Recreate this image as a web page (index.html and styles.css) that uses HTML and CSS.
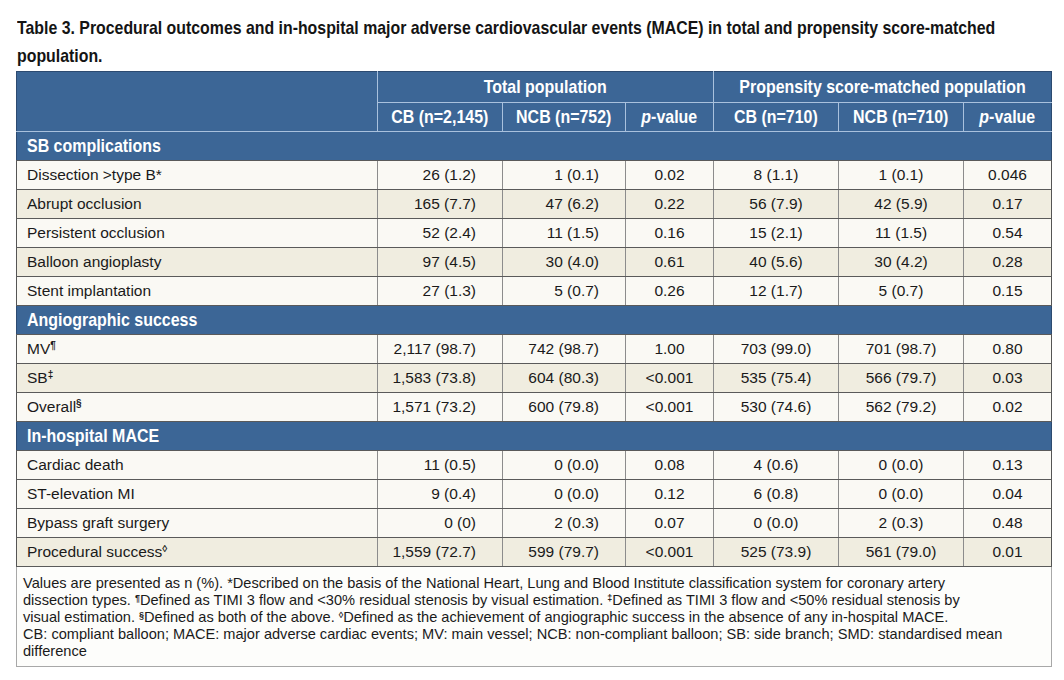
FILE: index.html
```html
<!DOCTYPE html>
<html lang="en">
<head>
<meta charset="utf-8">
<title>Table 3</title>
<link rel="stylesheet" href="styles.css">
</head>
<body>
<h1 class="title"><span class="title-in">Table 3. Procedural outcomes and in-hospital major adverse cardiovascular events (MACE) in total and propensity score-matched<br>population.</span></h1>
<table class="tbl">
  <colgroup>
    <col class="c-label">
    <col class="c-n">
    <col class="c-n2">
    <col class="c-p">
    <col class="c-n">
    <col class="c-n">
    <col class="c-p">
  </colgroup>
  <thead>
    <tr class="h1">
      <th class="blank" rowspan="2"></th>
      <th colspan="3"><div class="hc"><span class="cx">Total population</span></div></th>
      <th colspan="3"><div class="hc"><span class="cx">Propensity score-matched population</span></div></th>
    </tr>
    <tr class="h2">
      <th><div class="hc"><span class="cx">CB (n=2,145)</span></div></th>
      <th><div class="hc"><span class="cx">NCB (n=752)</span></div></th>
      <th><div class="hc"><span class="cx"><i>p</i>-value</span></div></th>
      <th><div class="hc"><span class="cx">CB (n=710)</span></div></th>
      <th><div class="hc"><span class="cx">NCB (n=710)</span></div></th>
      <th><div class="hc"><span class="cx"><i>p</i>-value</span></div></th>
    </tr>
  </thead>
  <tbody>
    <tr class="sec"><td colspan="7"><span class="cx cl">SB complications</span></td></tr>
    <tr class="odd"><td class="lab">Dissection &gt;type B*</td><td class="r">26 (1.2)</td><td class="r">1 (0.1)</td><td>0.02</td><td>8 (1.1)</td><td>1 (0.1)</td><td>0.046</td></tr>
    <tr class="even"><td class="lab">Abrupt occlusion</td><td class="r">165 (7.7)</td><td class="r">47 (6.2)</td><td>0.22</td><td>56 (7.9)</td><td>42 (5.9)</td><td>0.17</td></tr>
    <tr class="odd"><td class="lab">Persistent occlusion</td><td class="r">52 (2.4)</td><td class="r">11 (1.5)</td><td>0.16</td><td>15 (2.1)</td><td>11 (1.5)</td><td>0.54</td></tr>
    <tr class="even"><td class="lab">Balloon angioplasty</td><td class="r">97 (4.5)</td><td class="r">30 (4.0)</td><td>0.61</td><td>40 (5.6)</td><td>30 (4.2)</td><td>0.28</td></tr>
    <tr class="odd"><td class="lab">Stent implantation</td><td class="r">27 (1.3)</td><td class="r">5 (0.7)</td><td>0.26</td><td>12 (1.7)</td><td>5 (0.7)</td><td>0.15</td></tr>
    <tr class="sec"><td colspan="7"><span class="cx cl">Angiographic success</span></td></tr>
    <tr class="odd"><td class="lab">MV<sup>¶</sup></td><td class="r">2,117 (98.7)</td><td class="r">742 (98.7)</td><td>1.00</td><td>703 (99.0)</td><td>701 (98.7)</td><td>0.80</td></tr>
    <tr class="even"><td class="lab">SB<sup>‡</sup></td><td class="r">1,583 (73.8)</td><td class="r">604 (80.3)</td><td>&lt;0.001</td><td>535 (75.4)</td><td>566 (79.7)</td><td>0.03</td></tr>
    <tr class="odd"><td class="lab">Overall<sup>§</sup></td><td class="r">1,571 (73.2)</td><td class="r">600 (79.8)</td><td>&lt;0.001</td><td>530 (74.6)</td><td>562 (79.2)</td><td>0.02</td></tr>
    <tr class="sec"><td colspan="7"><span class="cx cl">In-hospital MACE</span></td></tr>
    <tr class="odd"><td class="lab">Cardiac death</td><td class="r">11 (0.5)</td><td class="r">0 (0.0)</td><td>0.08</td><td>4 (0.6)</td><td>0 (0.0)</td><td>0.13</td></tr>
    <tr class="odd"><td class="lab">ST-elevation MI</td><td class="r">9 (0.4)</td><td class="r">0 (0.0)</td><td>0.12</td><td>6 (0.8)</td><td>0 (0.0)</td><td>0.04</td></tr>
    <tr class="odd"><td class="lab">Bypass graft surgery</td><td class="r">0 (0)</td><td class="r">2 (0.3)</td><td>0.07</td><td>0 (0.0)</td><td>2 (0.3)</td><td>0.48</td></tr>
    <tr class="even"><td class="lab">Procedural success<sup>◊</sup></td><td class="r">1,559 (72.7)</td><td class="r">599 (79.7)</td><td>&lt;0.001</td><td>525 (73.9)</td><td>561 (79.0)</td><td>0.01</td></tr>
  </tbody>
  <tfoot>
    <tr><td colspan="7" class="note">Values are presented as n (%). *Described on the basis of the National Heart, Lung and Blood Institute classification system for coronary artery<br>dissection types. <sup>¶</sup>Defined as TIMI 3 flow and &lt;30% residual stenosis by visual estimation. <sup>‡</sup>Defined as TIMI 3 flow and &lt;50% residual stenosis by<br>visual estimation. <sup>§</sup>Defined as both of the above. <sup>◊</sup>Defined as the achievement of angiographic success in the absence of any in-hospital MACE.<br>CB: compliant balloon; MACE: major adverse cardiac events; MV: main vessel; NCB: non-compliant balloon; SB: side branch; SMD: standardised mean<br>difference</td></tr>
  </tfoot>
</table>
</body>
</html>
```

FILE: styles.css
```css
html, body {
  margin: 0;
  padding: 0;
  background: #ffffff;
  overflow: hidden;
}
body {
  padding: 14px 14px 0 16px;
  font-family: "Liberation Sans", Arial, sans-serif;
  color: #1a1a1a;
}
.title {
  margin: 0 0 1px 1px;
  height: 56px;
  overflow: hidden;
  font-family: "Liberation Sans", Arial, sans-serif;
  font-weight: bold;
  font-size: 19px;
  line-height: 28px;
  color: #141414;
  white-space: nowrap;
}
.title-in {
  display: inline-block;
  transform: scaleX(0.835);
  transform-origin: left top;
}
.tbl {
  width: 1034px;
  border-collapse: collapse;
  table-layout: fixed;
  font-size: 15.5px;
}
.c-label { width: 361px; }
.c-n { width: 125px; }
.c-n2 { width: 123px; }
.c-p { width: 88px; }

.cx {
  display: inline-block;
  white-space: nowrap;
  font-family: "Liberation Sans", Arial, sans-serif;
  font-weight: bold;
  font-size: 19px;
  transform: scaleX(0.84);
  transform-origin: center center;
}
.cx.cl { transform-origin: left center; }
.hc {
  display: flex;
  justify-content: center;
  align-items: center;
  overflow: hidden;
}

.tbl thead th {
  background: #3c6696;
  color: #ffffff;
  border: 1px solid #a9c1dd;
  padding: 0;
  text-align: center;
  white-space: nowrap;
}
.tbl thead tr.h1 th { height: 30px; border-top: 1px solid #2c4a70; }
.tbl thead tr.h2 th { height: 28px; }
.tbl thead th:first-child { border-left: 1px solid #2c4a70; }
.tbl thead tr.h1 th:last-child,
.tbl thead tr.h2 th:last-child { border-right: 1px solid #2c4a70; }

.tbl tbody tr.sec td {
  background: #3c6696;
  color: #fff;
  height: 28px;
  padding: 0 10px;
  text-align: left;
  border-left: 1px solid #2c4a70;
  border-right: 1px solid #2c4a70;
  border-top: 1px solid #a9c1dd;
}
.tbl tbody td {
  height: 28px;
  padding: 0 8px;
  text-align: center;
  border-top: 1px solid #5a5a5a;
  border-bottom: 1px solid #5a5a5a;
  border-left: 1px solid #8c8c8c;
  border-right: 1px solid #8c8c8c;
  white-space: nowrap;
}
.tbl tbody td.lab { text-align: left; padding-left: 10px; border-left: 1px solid #555; }
.tbl tbody td.r { text-align: right; padding-right: 26px; }
.tbl tbody td:last-child { border-right: 1px solid #555; }
.tbl tr.odd td { background: #faf9f4; }
.tbl tr.even td { background: #f0ede0; }
.tbl sup {
  font-size: 10px;
  font-weight: bold;
  line-height: 0;
  vertical-align: 5px;
}
.tbl td.note {
  background: #fdfdfb;
  padding: 8px 8px 6px 6px;
  font-size: 14.6px;
  line-height: 17px;
  text-align: left;
  white-space: nowrap;
  border: 1px solid #a8a8a8;
  border-top: 1px solid #5a5a5a;
}
.tbl td.note sup { font-size: 9px; font-weight: bold; vertical-align: 4px; }
```
